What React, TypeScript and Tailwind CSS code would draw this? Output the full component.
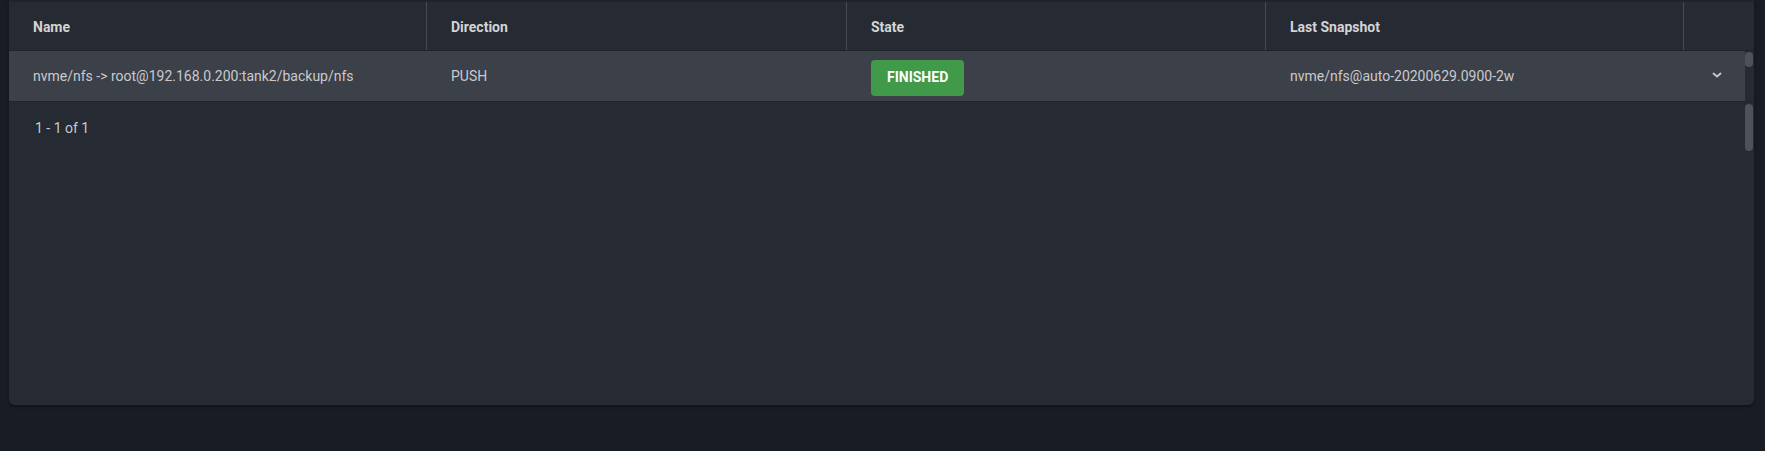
export default function App() {
  const columns = [
    { label: "Name", width: "w-[418px]" },
    { label: "Direction", width: "w-[420px]" },
    { label: "State", width: "w-[419px]" },
    { label: "Last Snapshot", width: "w-[418px]" },
  ];

  return (
    <div className="h-[451px] w-full bg-[#181d25] pl-[9px] font-['Roboto',sans-serif]">
      <div className="flex h-[405px] w-[1745px] flex-col rounded-b-md border-t-2 border-[#1f232a] bg-[#262b33] shadow-[0_2px_3px_rgba(0,0,0,0.35)]">
        {/* header */}
        <div className="flex h-[49px] shrink-0 border-b border-[#20242b]">
          {columns.map((col) => (
            <div
              key={col.label}
              className={`${col.width} flex items-center border-r border-[#454a52] pl-6 pt-[3px] text-[14px] font-bold text-[#d3d4d6]`}
            >
              {col.label}
            </div>
          ))}
          <div className="flex-1" />
        </div>

        {/* row */}
        <div className="flex h-[51px] shrink-0 border-b border-[#20242b]">
          <div className="flex flex-1 items-center bg-[#3c4049] text-[14px] text-[#c9cacd]">
            <div className="w-[418px] pl-6">
              nvme/nfs -&gt; root@192.168.0.200:tank2/backup/nfs
            </div>
            <div className="w-[420px] pl-6">PUSH</div>
            <div className="w-[419px] pl-6 pt-[3px]">
              <span className="inline-flex h-[36px] items-center rounded bg-[#41994a] px-4 text-[14px] font-bold text-white">
                FINISHED
              </span>
            </div>
            <div className="w-[418px] pl-6">nvme/nfs@auto-20200629.0900-2w</div>
            <div className="flex flex-1 justify-center pl-[4px] pb-[3px]">
              <svg width="10" height="6" viewBox="0 0 10 6" fill="none">
                <path
                  d="M1.5 1.5 L5 4.5 L8.5 1.5"
                  stroke="#c9cacd"
                  strokeWidth="1.8"
                  strokeLinecap="round"
                  strokeLinejoin="round"
                />
              </svg>
            </div>
          </div>
          <div className="w-[9px] pt-[1px]">
            <div className="h-[15px] w-[8px] rounded-full bg-[#4d5159]" />
          </div>
        </div>

        {/* body */}
        <div className="flex flex-1">
          <div className="flex-1 pt-[16px] pl-[26px] text-[14px] text-[#c9cacd]">
            1 - 1 of 1
          </div>
          <div className="w-[9px] pt-[2px]">
            <div className="h-[47px] w-[8px] rounded-full bg-[#4d5159]" />
          </div>
        </div>
      </div>
    </div>
  );
}
